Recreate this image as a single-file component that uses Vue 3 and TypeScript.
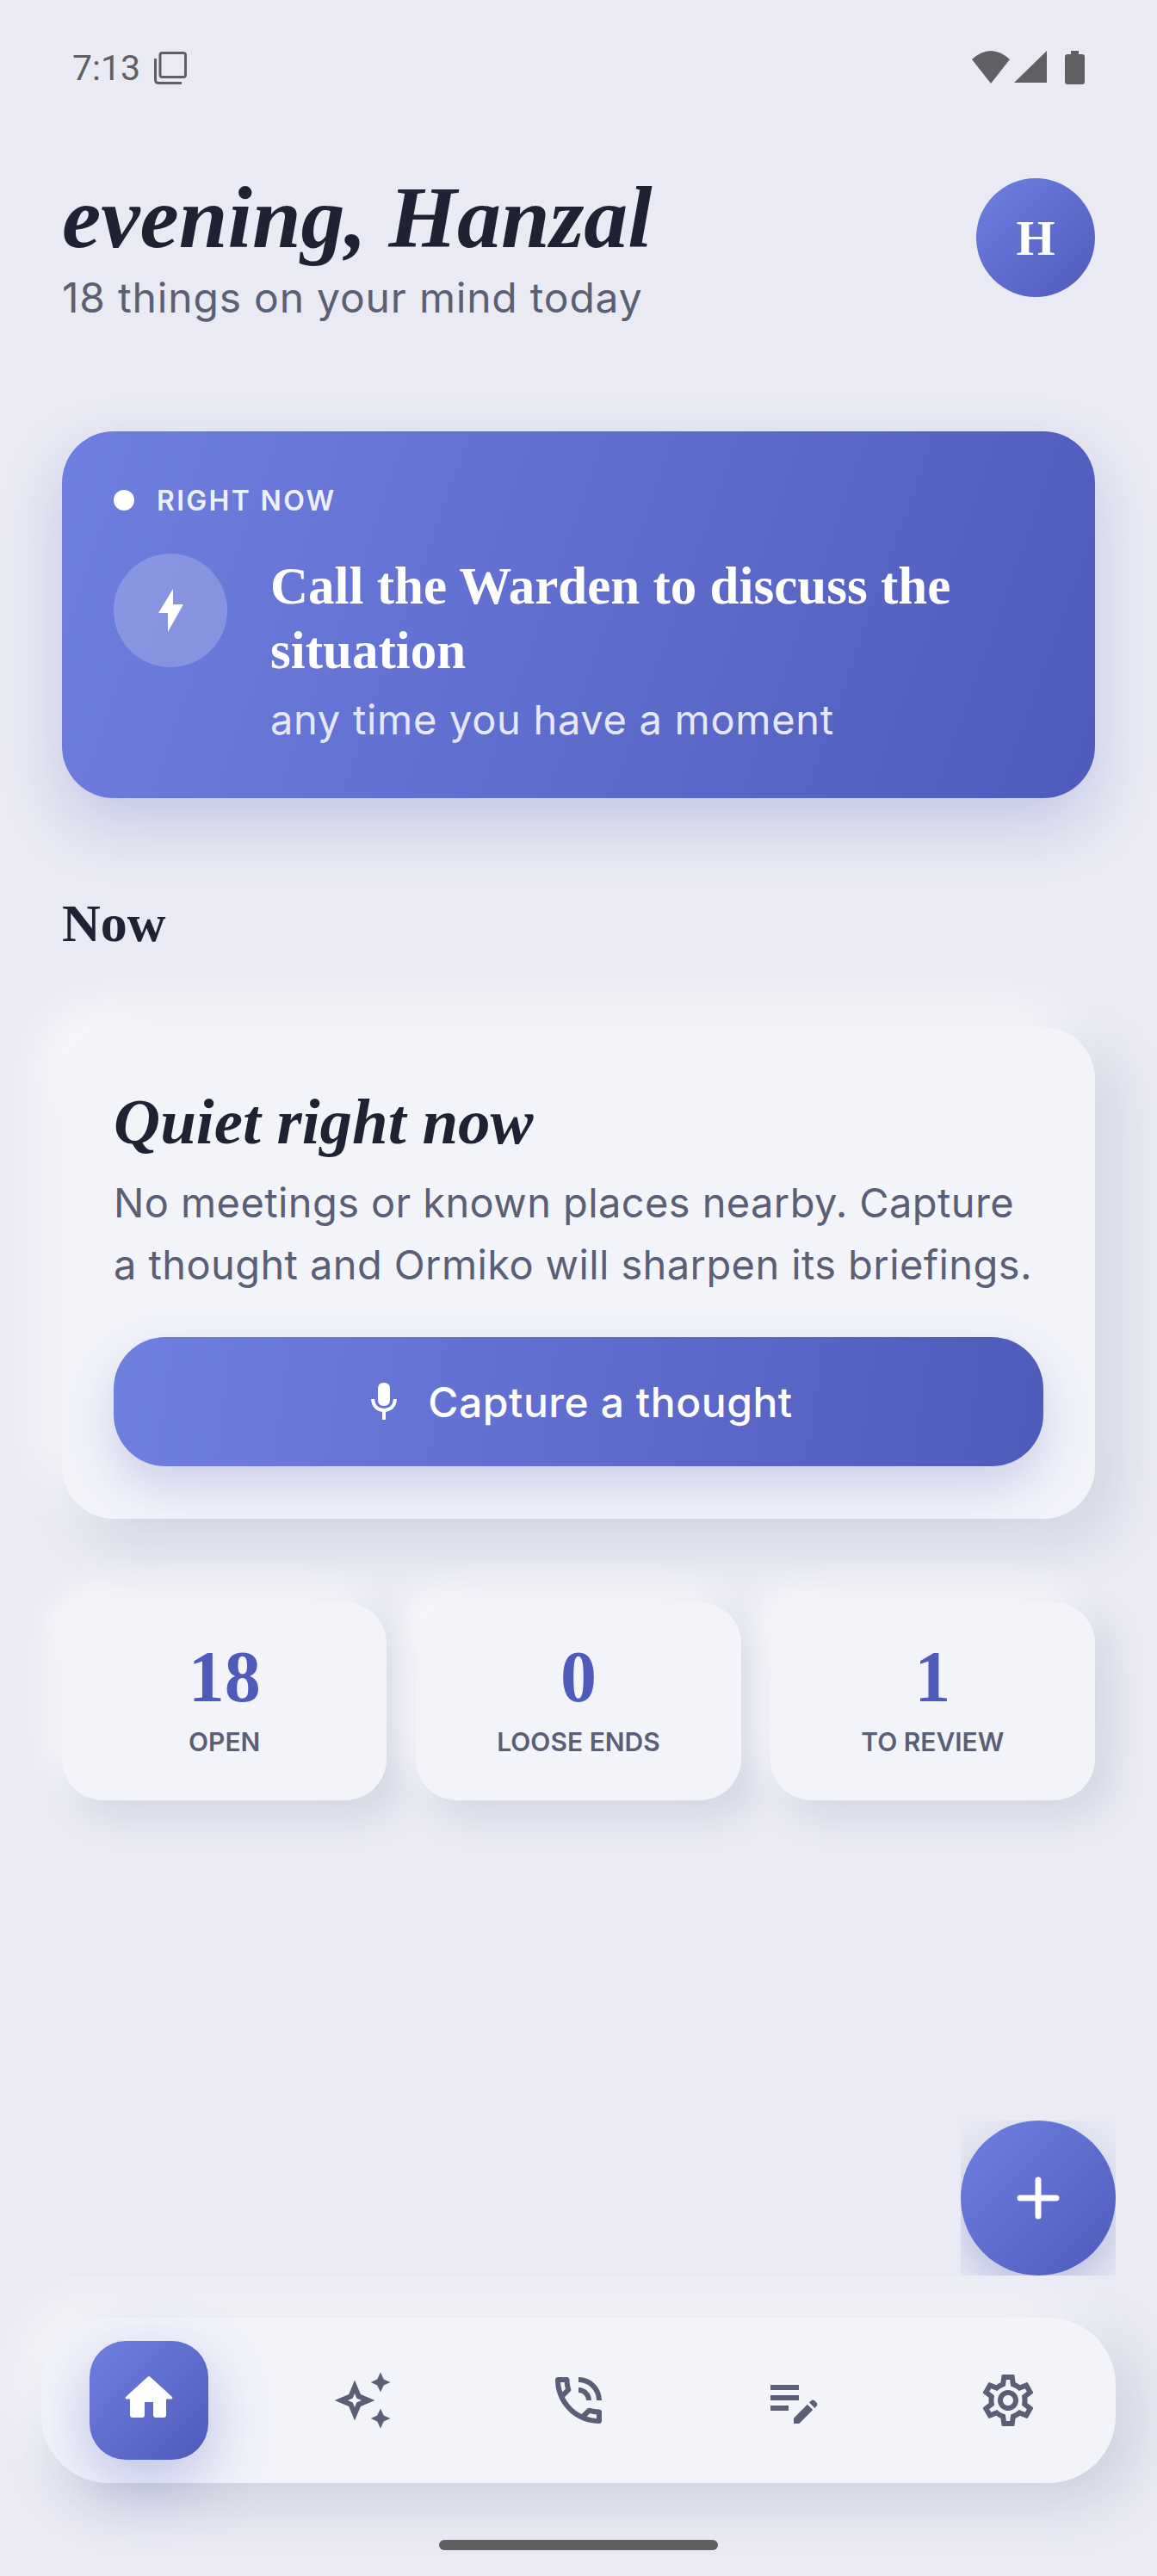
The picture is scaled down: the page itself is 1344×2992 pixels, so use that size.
<template>
  <div class="page">
    <div class="status-bar">
      <div class="status-left">
        <span class="clock">7:13</span>
        <svg class="copy-icon" width="38" height="38" viewBox="0 0 38 38" fill="none" stroke="#5f6063" stroke-width="3">
          <rect x="7" y="1.5" width="29.5" height="28" rx="2.5" />
          <path d="M1.5 8v24.5q0 4 4 4H32" />
        </svg>
      </div>
      <div class="status-right">
        <svg width="44" height="38" viewBox="0 0 44 38" fill="#5f6063">
          <path d="M0 10Q22 -10 44 10L22 38Z" />
        </svg>
        <svg width="38" height="38" viewBox="0 0 38 38" fill="#5f6063">
          <path d="M38 0V37H0Z" />
        </svg>
        <svg class="battery" width="23" height="39" viewBox="0 0 23 39" fill="#5f6063">
          <path d="M7 0h9v4h4q3 0 3 3v29q0 3-3 3H3q-3 0-3-3V7q0-3 3-3h4Z" />
        </svg>
      </div>
    </div>

    <main class="content">
      <header class="greeting">
        <div>
          <h1>evening, Hanzal</h1>
          <p>18 things on your mind today</p>
        </div>
        <div class="avatar">H</div>
      </header>

      <section class="hero">
        <div class="hero-label"><span class="dot"></span>RIGHT NOW</div>
        <div class="hero-body">
          <div class="hero-icon">
            <svg width="29" height="50" viewBox="0 0 29 50" fill="#fff">
              <path d="M17 0L0 28H11V50L29 18H17Z" />
            </svg>
          </div>
          <div>
            <h2>Call the Warden to discuss the situation</h2>
            <p>any time you have a moment</p>
          </div>
        </div>
      </section>

      <h3 class="section-title">Now</h3>

      <section class="quiet">
        <h2>Quiet right now</h2>
        <p>No meetings or known places nearby. Capture a thought and Ormiko will sharpen its briefings.</p>
        <button class="capture">
          <svg width="30" height="44" viewBox="0 0 30 44" fill="#fff">
            <path d="M15 0q7 0 7 7v13q0 7-7 7t-7-7V7q0-7 7-7Z" />
            <path d="M0 19h4q1 11 11 11t11-11h4q-1 13-13 15v9h-4v-9Q1 32 0 19Z" />
          </svg>
          Capture a thought
        </button>
      </section>

      <section class="stats">
        <div v-for="stat in stats" :key="stat.label" class="stat">
          <span class="stat-value">{{ stat.value }}</span>
          <span class="stat-label">{{ stat.label }}</span>
        </div>
      </section>
    </main>

    <div class="fab-row">
      <div class="fab-clip">
        <div class="fab">
          <svg width="54" height="54" viewBox="0 0 54 54" fill="none" stroke="#fff" stroke-width="7" stroke-linecap="round">
            <path d="M27 6V48M6 27H48" />
          </svg>
        </div>
      </div>
    </div>

    <div class="nav-wrap">
      <nav class="nav">
        <div class="nav-item">
          <div class="nav-active">
            <svg width="72" height="72" viewBox="0 0 72 72" fill="#fff">
              <path d="M34.5 8.7q1.5-1.2 3 0L63 32q1 2-1 2.500H56V53q0 3-3 3H44q-3 0-3-3V38H31V53q0 3-3 3H17q-3 0-3-3V34.500H10q-2-.5-1-2.500Z" />
            </svg>
          </div>
        </div>
        <div class="nav-item">
          <svg width="72" height="72" viewBox="0 0 24 24" fill="#5b5f75">
            <path fill-rule="evenodd" d="M8.670 4.200L11 9.700L16.500 12L11 14.300L8.670 19.800L6.400 14.300L.900 12L6.400 9.700ZM8.670 9.300L7.900 11.200L6 12L7.900 12.800L8.670 14.700L9.400 12.800L11.300 12L9.400 11.200Z" />
            <path d="M18.670 1.200L19.900 3.800L22.500 5L19.900 6.200L18.670 8.800L17.400 6.200L14.900 5L17.400 3.800Z" />
            <path d="M18.670 15.200L19.900 17.800L22.500 19L19.900 20.200L18.670 22.800L17.400 20.200L14.900 19L17.400 17.800Z" />
          </svg>
        </div>
        <div class="nav-item">
          <svg width="72" height="72" viewBox="0 0 24 24" fill="#5b5f75">
            <path d="M15 12h2c0-2.760-2.240-5-5-5v2c1.660 0 3 1.340 3 3zm4 0h2c0-4.970-4.030-9-9-9v2c3.870 0 7 3.130 7 7zm1 3.500c-1.250 0-2.450-.2-3.570-.57-.1-.03-.21-.05-.31-.05-.26 0-.51.1-.71.29l-2.200 2.200c-2.830-1.440-5.150-3.750-6.590-6.590l2.200-2.210c.28-.26.36-.65.25-1C8.700 6.450 8.500 5.250 8.500 4c0-.55-.45-1-1-1H4c-.55 0-1 .45-1 1 0 9.390 7.610 17 17 17 .55 0 1-.45 1-1v-3.500c0-.55-.45-1-1-1zM5.030 5h1.500c.07.88.22 1.750.45 2.580l-1.200 1.210c-.4-1.210-.66-2.470-.75-3.790zM19 18.970c-1.320-.09-2.600-.35-3.800-.76l1.200-1.200c.85.24 1.720.39 2.600.45v1.510z" />
          </svg>
        </div>
        <div class="nav-item">
          <svg width="72" height="72" viewBox="0 0 24 24" fill="#5b5f75">
            <path d="M3 10h11v2H3zm0-2h11V6H3zm0 8h7v-2H3zm15.010-3.130.71-.71c.39-.39 1.020-.39 1.410 0l.71.71c.39.39.39 1.020 0 1.410l-.71.71zm-.71.71-5.300 5.300V21h2.120l5.300-5.300z" />
          </svg>
        </div>
        <div class="nav-item">
          <svg width="72" height="72" viewBox="0 0 24 24" fill="#5b5f75">
            <path d="M19.430 12.980c.04-.32.07-.64.07-.98 0-.34-.03-.66-.07-.98l2.110-1.650c.19-.15.24-.42.12-.64l-2-3.460c-.09-.16-.26-.25-.44-.25-.06 0-.12.01-.17.03l-2.490 1c-.52-.4-1.080-.73-1.690-.98l-.38-2.650C14.460 2.180 14.250 2 14 2h-4c-.25 0-.46.18-.49.42l-.38 2.650c-.61.25-1.170.59-1.690.98l-2.490-1c-.06-.02-.12-.03-.18-.03-.17 0-.34.09-.43.25l-2 3.460c-.13.22-.07.49.12.64l2.110 1.650c-.04.32-.07.65-.07.98 0 .33.03.66.07.98l-2.110 1.650c-.19.15-.24.42-.12.64l2 3.460c.09.16.26.25.44.25.06 0 .12-.01.17-.03l2.490-1c.52.4 1.080.73 1.690.98l.38 2.650c.03.24.24.42.49.42h4c.25 0 .46-.18.49-.42l.38-2.650c.61-.25 1.170-.59 1.690-.98l2.490 1c.06.02.12.03.18.03.17 0 .34-.09.43-.25l2-3.460c.12-.22.07-.49-.12-.64l-2.110-1.650zm-1.980-1.710c.04.31.05.52.05.73 0 .21-.02.43-.05.73l-.14 1.130.89.7 1.080.84-.7 1.210-1.270-.51-1.040-.42-.9.68c-.43.32-.84.56-1.250.73l-1.060.43-.16 1.130-.2 1.350h-1.400l-.19-1.350-.16-1.130-1.060-.43c-.43-.18-.83-.41-1.230-.71l-.91-.7-1.060.43-1.270.51-.7-1.210 1.080-.84.89-.7-.14-1.130c-.03-.31-.05-.54-.05-.74s.02-.43.05-.73l.14-1.130-.89-.7-1.080-.84.7-1.210 1.270.51 1.040.42.9-.68c.43-.32.84-.56 1.250-.73l1.060-.43.16-1.130.2-1.350h1.390l.19 1.350.16 1.130 1.060.43c.43.18.83.41 1.230.71l.91.7 1.060-.43 1.270-.51.7 1.210-1.070.85-.89.7.14 1.130zM12 8c-2.210 0-4 1.790-4 4s1.790 4 4 4 4-1.790 4-4-1.790-4-4-4zm0 6c-1.100 0-2-.9-2-2s.9-2 2-2 2 .9 2 2-.9 2-2 2z" />
          </svg>
        </div>
      </nav>
      <div class="home-bar"></div>
    </div>
  </div>
</template>

<script setup lang="ts">
interface Stat {
  value: number
  label: string
}

const stats: Stat[] = [
  { value: 18, label: 'OPEN' },
  { value: 0, label: 'LOOSE ENDS' },
  { value: 1, label: 'TO REVIEW' }
]
</script>

<style>
body {
  background: #e9eaf3;
}
</style>

<style scoped>
.page {
  width: 1344px;
  height: 2992px;
  display: flex;
  flex-direction: column;
  background: #e9eaf3;
  font-family: Inter, 'Liberation Sans', sans-serif;
  color: #1f2233;
  overflow: hidden;
}

.status-bar {
  height: 100px;
  padding: 59px 84px 0;
  box-sizing: border-box;
  display: flex;
  justify-content: space-between;
  align-items: flex-start;
}

.status-left {
  display: flex;
  align-items: center;
  gap: 16px;
  height: 40px;
}

.clock {
  font-family: Roboto, sans-serif;
  font-size: 41px;
  color: #5f6063;
}

.status-right {
  display: flex;
  align-items: flex-start;
  gap: 5px;
  height: 40px;
}

.battery {
  margin-left: 16px;
}

.content {
  flex: 1;
  padding: 106px 72px 0;
  min-height: 0;
}

.greeting {
  display: flex;
  justify-content: space-between;
  align-items: flex-start;
  height: 295px;
}

.greeting h1 {
  margin: -8px 0 0;
  font-family: 'Liberation Serif', serif;
  font-size: 102px;
  font-style: italic;
  font-weight: 700;
  line-height: 110px;
}

.greeting p {
  margin: 9px 0 0;
  font-size: 48px;
  letter-spacing: 0.8px;
  line-height: 58px;
  color: #5b5f75;
}

.avatar {
  width: 138px;
  height: 138px;
  margin-top: 1px;
  border-radius: 50%;
  background: linear-gradient(135deg, #6f7fe0, #4f5bbb);
  color: #fff;
  display: flex;
  align-items: center;
  justify-content: center;
  font-family: 'Liberation Serif', serif;
  font-size: 58px;
  font-weight: 700;
}

.hero {
  height: 426px;
  box-sizing: border-box;
  padding: 62px 60px 0;
  border-radius: 60px;
  background: linear-gradient(109.5deg, #6f7fe0, #4f5bbb);
  color: #fff;
  box-shadow: 0 30px 70px rgba(80, 92, 190, 0.24);
}

.hero-label {
  display: flex;
  align-items: center;
  gap: 26px;
  height: 36px;
  font-size: 32px;
  font-weight: 600;
  letter-spacing: 2.3px;
  color: #eef0ff;
}

.dot {
  width: 24px;
  height: 24px;
  border-radius: 50%;
  background: #fff;
}

.hero-body {
  display: flex;
  gap: 50px;
  margin-top: 44px;
}

.hero-icon {
  flex: none;
  width: 132px;
  height: 132px;
  border-radius: 50%;
  background: rgba(255, 255, 255, 0.2);
  display: flex;
  align-items: center;
  justify-content: center;
}

.hero h2 {
  margin: 0;
  font-family: 'Liberation Serif', serif;
  font-size: 61px;
  font-weight: 700;
  line-height: 75px;
}

.hero p {
  margin: 14px 0 0;
  font-size: 47px;
  letter-spacing: 0.7px;
  line-height: 58px;
  color: #e6e8fa;
}

.section-title {
  margin: 110px 0 0;
  font-family: 'Liberation Serif', serif;
  font-size: 62px;
  font-weight: 700;
  line-height: 70px;
}

.quiet {
  height: 571px;
  box-sizing: border-box;
  margin-top: 86px;
  padding: 70px 60px 0;
  border-radius: 60px;
  background: #f3f4fa;
  box-shadow: 24px 24px 60px rgba(120, 125, 160, 0.2), -24px -24px 60px rgba(255, 255, 255, 0.8);
}

.quiet h2 {
  margin: 0;
  font-family: 'Liberation Serif', serif;
  font-size: 75px;
  font-style: italic;
  font-weight: 700;
  line-height: 80px;
}

.quiet p {
  margin: 18px 0 0;
  font-size: 47px;
  letter-spacing: 0.4px;
  line-height: 72px;
  color: #5b5f75;
}

.capture {
  width: 100%;
  height: 150px;
  margin-top: 48px;
  padding: 0 0 0 8px;
  border: 0;
  border-radius: 60px;
  background: linear-gradient(97.9deg, #6f7fe0, #4f5bbb);
  color: #fff;
  font: 500 48px Inter, sans-serif;
  letter-spacing: 0.55px;
  display: flex;
  align-items: center;
  justify-content: center;
  gap: 36px;
  box-shadow: 0 24px 56px rgba(80, 92, 190, 0.24);
}

.stats {
  display: grid;
  grid-template-columns: repeat(3, 1fr);
  gap: 34px;
  margin-top: 97px;
}

.stat {
  height: 230px;
  border-radius: 48px;
  background: #f3f4fa;
  box-shadow: 16px 16px 40px rgba(120, 125, 160, 0.2), -16px -16px 40px rgba(255, 255, 255, 0.8);
  display: flex;
  flex-direction: column;
  align-items: center;
  padding-top: 43px;
  box-sizing: border-box;
}

.stat-value {
  font-family: 'Liberation Serif', serif;
  font-size: 84px;
  font-weight: 700;
  line-height: 88px;
  color: #4f5bbb;
}

.stat-label {
  margin-top: 12px;
  font-size: 30px;
  font-weight: 600;
  line-height: 38px;
  color: #5b5f75;
}

.fab-row {
  display: flex;
  justify-content: flex-end;
  padding-right: 48px;
}

.fab-clip {
  width: 180px;
  height: 180px;
  overflow: hidden;
}

.fab {
  width: 180px;
  height: 180px;
  border-radius: 50%;
  background: linear-gradient(135deg, #6f7fe0, #4f5bbb);
  box-shadow: 0 20px 50px rgba(80, 92, 190, 0.3);
  display: flex;
  align-items: center;
  justify-content: center;
}

.nav-wrap {
  height: 349px;
  box-sizing: border-box;
  padding: 49px 48px 0;
  overflow: hidden;
  display: flex;
  flex-direction: column;
  align-items: center;
}

.nav {
  width: 100%;
  height: 192px;
  flex: none;
  border-radius: 78px;
  background: #f3f4fa;
  box-shadow: 20px 20px 60px rgba(120, 125, 160, 0.25), -20px -20px 60px rgba(255, 255, 255, 0.8);
  display: grid;
  grid-template-columns: repeat(5, 1fr);
  align-items: center;
  justify-items: center;
}

.nav-item {
  display: flex;
  align-items: center;
  justify-content: center;
}

.nav-active {
  width: 138px;
  height: 138px;
  border-radius: 42px;
  background: linear-gradient(135deg, #6f7fe0, #4f5bbb);
  box-shadow: 0 24px 72px rgba(80, 92, 190, 0.35);
  display: flex;
  align-items: center;
  justify-content: center;
}

.home-bar {
  width: 324px;
  height: 12px;
  margin-top: 66px;
  flex: none;
  border-radius: 6px;
  background: #5e5f63;
}
</style>
